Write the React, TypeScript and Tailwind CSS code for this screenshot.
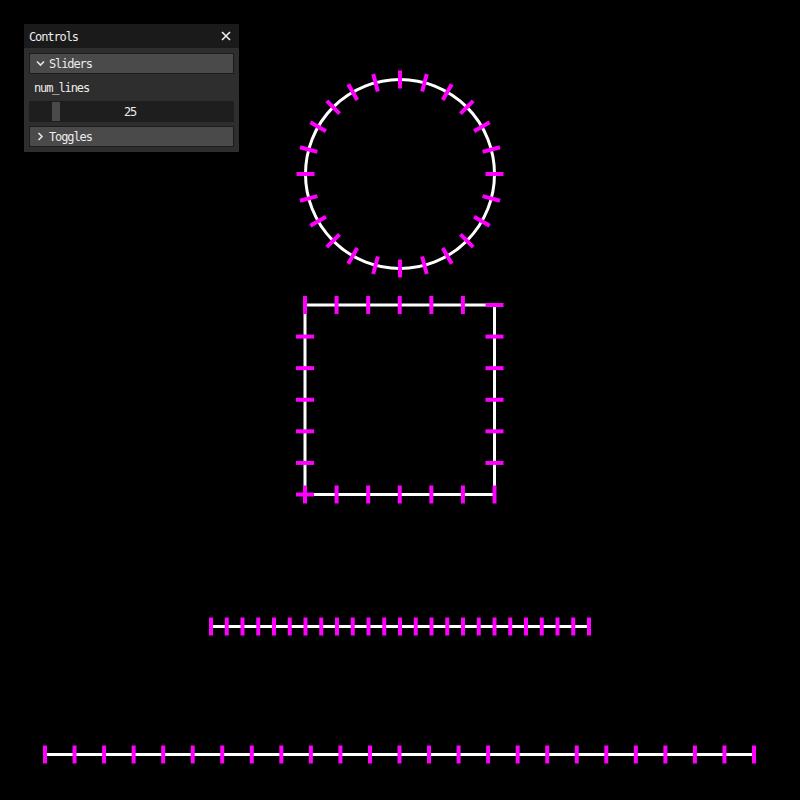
import React from "react";

const MAG = "#ff00ff";

function Tick({ x, y, angle, len = 18 }: { x: number; y: number; angle: number; len?: number }) {
  const dx = (Math.cos(angle) * len) / 2;
  const dy = (Math.sin(angle) * len) / 2;
  return <line x1={x - dx} y1={y - dy} x2={x + dx} y2={y + dy} stroke={MAG} strokeWidth={4} />;
}

function Canvas() {
  const cx = 400;
  const cy = 174;
  const r = 94.5;
  const circleTicks = Array.from({ length: 24 }, (_, i) => {
    const a = -Math.PI / 2 + (i * Math.PI * 2) / 24;
    return { x: cx + Math.cos(a) * r, y: cy + Math.sin(a) * r, angle: a };
  });

  const L = 305;
  const R = 494.5;
  const T = 305;
  const B = 494.5;
  const step = (R - L) / 6;
  const sq: { x: number; y: number; angle: number }[] = [];
  for (let k = 0; k < 6; k++) sq.push({ x: L + step * k, y: T, angle: Math.PI / 2 });
  for (let k = 0; k < 6; k++) sq.push({ x: R, y: T + step * k, angle: 0 });
  for (let k = 0; k < 6; k++) sq.push({ x: R - step * k, y: B, angle: Math.PI / 2 });
  for (let k = 0; k < 6; k++) sq.push({ x: L, y: B - step * k, angle: 0 });
  sq.push({ x: L, y: B, angle: Math.PI / 2 });

  const line1 = Array.from({ length: 25 }, (_, i) => 211 + ((589 - 211) * i) / 24);
  const line2 = Array.from({ length: 25 }, (_, i) => 45 + ((754 - 45) * i) / 24);

  return (
    <svg width={800} height={800} viewBox="0 0 800 800" className="block">
      <rect width={800} height={800} fill="#000" />
      <circle cx={cx} cy={cy} r={r} fill="none" stroke="#fff" strokeWidth={3} />
      {circleTicks.map((t, i) => (
        <Tick key={i} {...t} />
      ))}
      <rect x={L} y={T} width={R - L} height={B - T} fill="none" stroke="#fff" strokeWidth={3} />
      {sq.map((t, i) => (
        <Tick key={i} {...t} />
      ))}
      <line x1={211} y1={626.5} x2={589} y2={626.5} stroke="#fff" strokeWidth={3} />
      {line1.map((x, i) => (
        <Tick key={i} x={x} y={626.5} angle={Math.PI / 2} />
      ))}
      <line x1={45} y1={754.5} x2={754} y2={754.5} stroke="#fff" strokeWidth={3} />
      {line2.map((x, i) => (
        <Tick key={i} x={x} y={754.5} angle={Math.PI / 2} />
      ))}
    </svg>
  );
}

function ChevronDown() {
  return (
    <svg width={9} height={7} viewBox="0 0 9 7" className="shrink-0">
      <polyline points="1,1.5 4.5,5 8,1.5" fill="none" stroke="#e6e6e6" strokeWidth={1.6} />
    </svg>
  );
}

function ChevronRight() {
  return (
    <svg width={9} height={9} viewBox="0 0 9 9" className="shrink-0">
      <polyline points="2.5,1 6,4.5 2.5,8" fill="none" stroke="#e6e6e6" strokeWidth={1.6} />
    </svg>
  );
}

export default function App() {
  const font = { fontFamily: '"DejaVu Sans Mono", "Liberation Mono", monospace' };
  return (
    <div className="relative w-[800px] h-[800px] bg-black overflow-hidden">
      <Canvas />
      <div
        className="absolute left-[24px] top-[24px] w-[215px] bg-[#2e2e2e] text-[12px] tracking-[-1.1px] text-[#ececec] pb-[5px]"
        style={font}
      >
        <div className="h-[24px] bg-[#1a1a1a] flex items-center justify-between pl-[5px] pr-[8px]">
          <span className="pt-[1px]">Controls</span>
          <svg width={10} height={10} viewBox="0 0 10 10">
            <path d="M1 1 L9 9 M9 1 L1 9" stroke="#f0f0f0" strokeWidth={1.6} />
          </svg>
        </div>
        <div className="px-[5px] pt-[5px] flex flex-col">
          <div className="h-[21px] bg-[#4a4a4a] border border-[#1c1c1c] flex items-center gap-[4px] pl-[6px]">
            <ChevronDown />
            <span>Sliders</span>
          </div>
          <div className="h-[27px] flex items-center pl-[5px]">num_lines</div>
          <div className="relative h-[21px] bg-[#1e1e1e] flex items-center justify-center pr-[3px]">
            <div className="absolute left-[23px] top-[1px] bottom-[1px] w-[8px] bg-[#4a4a4a]" />
            <span className="relative">25</span>
          </div>
          <div className="mt-[4px] h-[21px] bg-[#4a4a4a] border border-[#1c1c1c] flex items-center gap-[4px] pl-[6px]">
            <ChevronRight />
            <span>Toggles</span>
          </div>
        </div>
      </div>
    </div>
  );
}
